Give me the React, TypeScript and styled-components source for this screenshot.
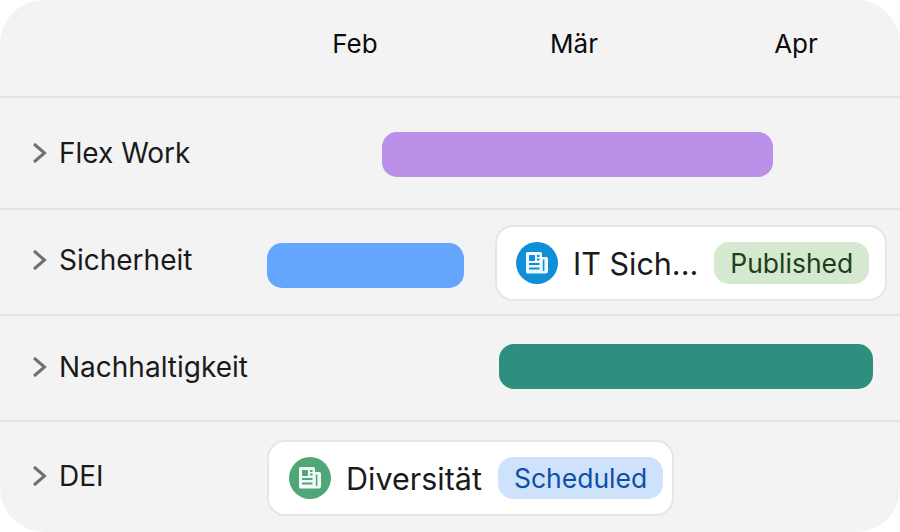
import styled, { createGlobalStyle } from "styled-components";

const GlobalStyle = createGlobalStyle`
  html, body {
    margin: 0;
    padding: 0;
    background: #ffffff;
  }
`;

const Board = styled.div`
  width: 900px;
  height: 532px;
  background: #f3f3f4;
  border-radius: 44px;
  overflow: hidden;
  display: grid;
  grid-template-rows: 98px 112px 106px 106px 110px;
  font-family: Inter, "Liberation Sans", sans-serif;
`;

const Header = styled.div`
  display: flex;
  align-items: center;
  padding: 0 0 9px 305px;
  border-bottom: 2px solid #e3e3e4;
  box-sizing: border-box;
`;

const Month = styled.div<{ $gap: number }>`
  width: 100px;
  margin-left: ${(p) => p.$gap}px;
  text-align: center;
  font-size: 26px;
  font-weight: 400;
  color: #0c0c0d;
`;

const Row = styled.div<{ $last?: boolean }>`
  display: flex;
  align-items: stretch;
  box-sizing: border-box;
  border-bottom: ${(p) => (p.$last ? "none" : "2px solid #e3e3e4")};
`;

const Label = styled.div<{ $shift: number }>`
  width: 267px;
  flex: none;
  display: flex;
  align-items: center;
  gap: 12px;
  padding: 0 0 ${(p) => p.$shift}px 32px;
  box-sizing: border-box;
  font-size: 28px;
  font-weight: 400;
  color: #1a1a1b;
`;

const Track = styled.div`
  flex: 1;
  display: flex;
  align-items: center;
`;

// nudge moves a bar off the row's centre line, the bars don't sit quite centred
const Bar = styled.div<{
  $offset: number;
  $width: number;
  $color: string;
  $nudge: number;
}>`
  margin-left: ${(p) => p.$offset}px;
  margin-top: ${(p) => Math.max(p.$nudge, 0)}px;
  margin-bottom: ${(p) => Math.max(-p.$nudge, 0)}px;
  width: ${(p) => p.$width}px;
  height: 45px;
  border-radius: 15px;
  background: ${(p) => p.$color};
`;

const Card = styled.div<{ $offset: number; $width: number; $pad: number }>`
  margin-left: ${(p) => p.$offset}px;
  margin-top: 2px;
  width: ${(p) => p.$width}px;
  height: 76px;
  box-sizing: border-box;
  display: flex;
  align-items: center;
  padding-left: ${(p) => p.$pad}px;
  background: #ffffff;
  border: 2px solid #e6e6e7;
  border-radius: 18px;
`;

const CardTitle = styled.span`
  margin-left: 15px;
  font-size: 30.5px;
  font-weight: 400;
  color: #1a1a1b;
  white-space: nowrap;
`;

const Badge = styled.span<{ $bg: string; $fg: string }>`
  margin-left: 16px;
  height: 42px;
  padding: 0 16px;
  display: flex;
  align-items: center;
  border-radius: 15px;
  background: ${(p) => p.$bg};
  color: ${(p) => p.$fg};
  font-size: 26.5px;
  font-weight: 400;
`;

const IconSvg = styled.svg`
  flex: none;
  display: block;
`;

function Chevron() {
  return (
    <IconSvg width="15" height="22" viewBox="0 0 15 22">
      <path
        d="M2 2 L12.5 11 L2 20"
        fill="none"
        stroke="#707073"
        strokeWidth="3"
      />
    </IconSvg>
  );
}

function NewsIcon({ color }: { color: string }) {
  return (
    <IconSvg width="42" height="42" viewBox="0 0 42 42">
      <circle cx="21" cy="21" r="21" fill={color} />
      <path
        d="M11.5 10h13a1.5 1.5 0 0 1 1.5 1.5V15h4.5a1.5 1.5 0 0 1 1.5 1.5V29a2.5 2.5 0 0 1-2.5 2.5H11.5A1.5 1.5 0 0 1 10 30V11.5A1.5 1.5 0 0 1 11.5 10z"
        fill="#fff"
        fillOpacity="0.94"
      />
      <rect x="13" y="13" width="6" height="6" rx="0.8" fill={color} />
      <path
        d="M21 14h2.5M21 17.5h2.5M13 22h10.5M13 26.5h10.5"
        stroke={color}
        strokeWidth="1.8"
      />
      <path d="M27.6 17.5v11.5" stroke={color} strokeWidth="1.6" />
    </IconSvg>
  );
}

export default function App() {
  return (
    <>
      <GlobalStyle />
      <Board>
        <Header>
          <Month $gap={0}>Feb</Month>
          <Month $gap={119}>Mär</Month>
          <Month $gap={122}>Apr</Month>
        </Header>
        <Row>
          <Label $shift={0}>
            <Chevron />
            Flex Work
          </Label>
          <Track>
            <Bar $offset={115} $width={391} $color="#bb90e9" $nudge={2} />
          </Track>
        </Row>
        <Row>
          <Label $shift={4}>
            <Chevron />
            Sicherheit
          </Label>
          <Track>
            <Bar $offset={0} $width={197} $color="#64a5fe" $nudge={6} />
            <Card $offset={31} $width={392} $pad={19}>
              <NewsIcon color="#0f8fd6" />
              <CardTitle>IT Sich...</CardTitle>
              <Badge $bg="#d5e8d0" $fg="#1d3f1a">
                Published
              </Badge>
            </Card>
          </Track>
        </Row>
        <Row>
          <Label $shift={3}>
            <Chevron />
            Nachhaltigkeit
          </Label>
          <Track>
            <Bar $offset={232} $width={374} $color="#2f8f7e" $nudge={-4} />
          </Track>
        </Row>
        <Row $last>
          <Label $shift={2}>
            <Chevron />
            DEI
          </Label>
          <Track>
            <Card $offset={0} $width={407} $pad={20}>
              <NewsIcon color="#4fa777" />
              <CardTitle>Diversität</CardTitle>
              <Badge $bg="#cfe2fc" $fg="#0f4fa8">
                Scheduled
              </Badge>
            </Card>
          </Track>
        </Row>
      </Board>
    </>
  );
}
